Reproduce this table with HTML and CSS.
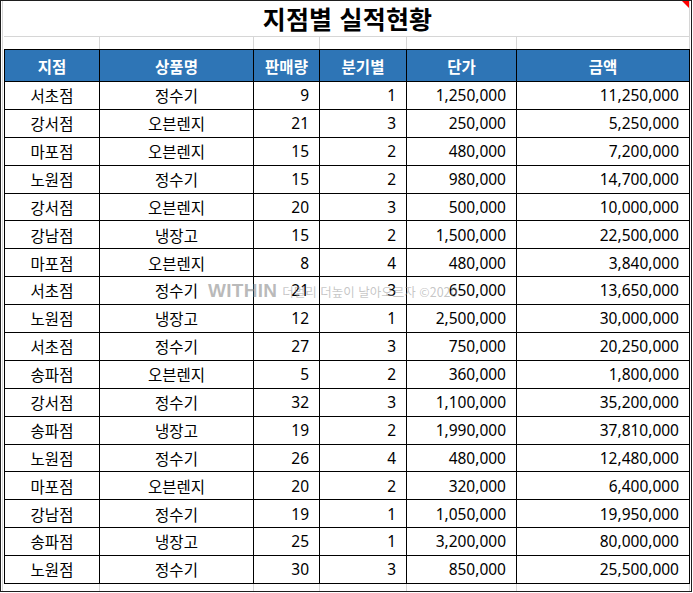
FILE: index.html
```html
<!DOCTYPE html>
<html lang="ko">
<head>
<meta charset="utf-8">
<title>지점별 실적현황</title>
<link rel="stylesheet" href="styles.css">
</head>
<body>
<div class="frame">
  <div class="sheet">
    <div class="title-row">
      <div class="title">지점별 실적현황</div>
      <span class="comment-mark"></span>
    </div>
    <div class="gridline-row spacer">
      <span></span><span></span><span></span><span></span><span></span><span></span>
    </div>
    <div class="table">
      <div class="th">지점</div><div class="th">상품명</div><div class="th">판매량</div><div class="th">분기별</div><div class="th">단가</div><div class="th">금액</div>
      <div class="td c">서초점</div><div class="td c">정수기</div><div class="td r">9</div><div class="td r">1</div><div class="td r">1,250,000</div><div class="td r">11,250,000</div>
      <div class="td c">강서점</div><div class="td c">오븐렌지</div><div class="td r">21</div><div class="td r">3</div><div class="td r">250,000</div><div class="td r">5,250,000</div>
      <div class="td c">마포점</div><div class="td c">오븐렌지</div><div class="td r">15</div><div class="td r">2</div><div class="td r">480,000</div><div class="td r">7,200,000</div>
      <div class="td c">노원점</div><div class="td c">정수기</div><div class="td r">15</div><div class="td r">2</div><div class="td r">980,000</div><div class="td r">14,700,000</div>
      <div class="td c">강서점</div><div class="td c">오븐렌지</div><div class="td r">20</div><div class="td r">3</div><div class="td r">500,000</div><div class="td r">10,000,000</div>
      <div class="td c">강남점</div><div class="td c">냉장고</div><div class="td r">15</div><div class="td r">2</div><div class="td r">1,500,000</div><div class="td r">22,500,000</div>
      <div class="td c">마포점</div><div class="td c">오븐렌지</div><div class="td r">8</div><div class="td r">4</div><div class="td r">480,000</div><div class="td r">3,840,000</div>
      <div class="td c">서초점</div><div class="td c">정수기</div><div class="td r">21</div><div class="td r">3</div><div class="td r">650,000</div><div class="td r">13,650,000</div>
      <div class="td c">노원점</div><div class="td c">냉장고</div><div class="td r">12</div><div class="td r">1</div><div class="td r">2,500,000</div><div class="td r">30,000,000</div>
      <div class="td c">서초점</div><div class="td c">정수기</div><div class="td r">27</div><div class="td r">3</div><div class="td r">750,000</div><div class="td r">20,250,000</div>
      <div class="td c">송파점</div><div class="td c">오븐렌지</div><div class="td r">5</div><div class="td r">2</div><div class="td r">360,000</div><div class="td r">1,800,000</div>
      <div class="td c">강서점</div><div class="td c">정수기</div><div class="td r">32</div><div class="td r">3</div><div class="td r">1,100,000</div><div class="td r">35,200,000</div>
      <div class="td c">송파점</div><div class="td c">냉장고</div><div class="td r">19</div><div class="td r">2</div><div class="td r">1,990,000</div><div class="td r">37,810,000</div>
      <div class="td c">노원점</div><div class="td c">정수기</div><div class="td r">26</div><div class="td r">4</div><div class="td r">480,000</div><div class="td r">12,480,000</div>
      <div class="td c">마포점</div><div class="td c">오븐렌지</div><div class="td r">20</div><div class="td r">2</div><div class="td r">320,000</div><div class="td r">6,400,000</div>
      <div class="td c">강남점</div><div class="td c">정수기</div><div class="td r">19</div><div class="td r">1</div><div class="td r">1,050,000</div><div class="td r">19,950,000</div>
      <div class="td c">송파점</div><div class="td c">냉장고</div><div class="td r">25</div><div class="td r">1</div><div class="td r">3,200,000</div><div class="td r">80,000,000</div>
      <div class="td c">노원점</div><div class="td c">정수기</div><div class="td r">30</div><div class="td r">3</div><div class="td r">850,000</div><div class="td r">25,500,000</div>
    </div>
    <div class="gridline-row bottom">
      <span></span><span></span><span></span><span></span><span></span><span></span>
    </div>
  </div>
  <div class="watermark"><span class="wm-logo">WITHIN</span><span class="wm-text">더멀리 더높이 날아오르자 ©2020</span></div>
</div>
</body>
</html>
```
FILE: styles.css
```css
html, body {
  margin: 0;
  padding: 0;
  background: #ffffff;
}

body {
  font-family: "Noto Sans", "Noto Sans CJK KR", sans-serif;
  color: #000;
}

.frame {
  position: relative;
  box-sizing: border-box;
  width: 692px;
  height: 592px;
  border: 1px solid #1e1e1e;
  overflow: hidden;
}

.sheet {
  box-sizing: border-box;
  height: 100%;
  margin-left: 1px;
  border-left: 1px solid #d6d6d6;
  padding-left: 1px;
  display: flex;
  flex-direction: column;
}

.title-row {
  position: relative;
  box-sizing: border-box;
  width: 686px;
  height: 36px;
  border-bottom: 1px solid #d6d6d6;
  border-right: 1px solid #d6d6d6;
  display: flex;
  align-items: center;
  justify-content: center;
}

.title {
  font-family: "Noto Sans CJK KR", sans-serif;
  font-weight: 700;
  font-size: 25px;
  letter-spacing: 0.2px;
  line-height: 1;
  padding-left: 2px;
}

.comment-mark {
  position: absolute;
  top: 0;
  right: 0;
  width: 0;
  height: 0;
  border-top: 7px solid #ff0000;
  border-left: 7px solid transparent;
}

.gridline-row {
  display: grid;
  grid-template-columns: 96px 154px 66px 87px 110px 173px;
  width: 686px;
}

.gridline-row span {
  box-sizing: border-box;
  border-right: 1px solid #d6d6d6;
}

.spacer {
  height: 12px;
}

.bottom {
  flex: 1;
}

.table {
  display: grid;
  grid-template-columns: 94px 153px 65px 86px 109px 172px;
  grid-template-rows: 31px;
  grid-auto-rows: 26.9px;
  gap: 1px;
  width: 684px;
  background: #000;
  border: 1px solid #000;
}

.th {
  background: #2e75b6;
  color: #fff;
  font-weight: 700;
  font-size: 15.5px;
  display: flex;
  align-items: center;
  justify-content: center;
  font-family: "Noto Sans CJK KR", sans-serif;
}

.td {
  background: #fff;
  font-size: 15.5px;
  display: flex;
  align-items: center;
  line-height: 1;
  padding-top: 1px;
}

.td.c {
  justify-content: center;
  font-family: "Noto Sans CJK KR", sans-serif;
}

.td.r {
  justify-content: flex-end;
  padding-right: 10px;
}

.watermark {
  position: absolute;
  left: 207px;
  top: 279px;
  display: flex;
  align-items: center;
  gap: 5px;
  pointer-events: none;
  color: rgba(140, 140, 140, 0.6);
}

.wm-logo {
  font-family: "Liberation Sans", sans-serif;
  font-weight: 700;
  font-size: 19px;
  letter-spacing: 0.3px;
}

.wm-text {
  font-family: "Noto Sans CJK KR", sans-serif;
  font-size: 12.5px;
  color: rgba(150, 150, 150, 0.55);
}
```
